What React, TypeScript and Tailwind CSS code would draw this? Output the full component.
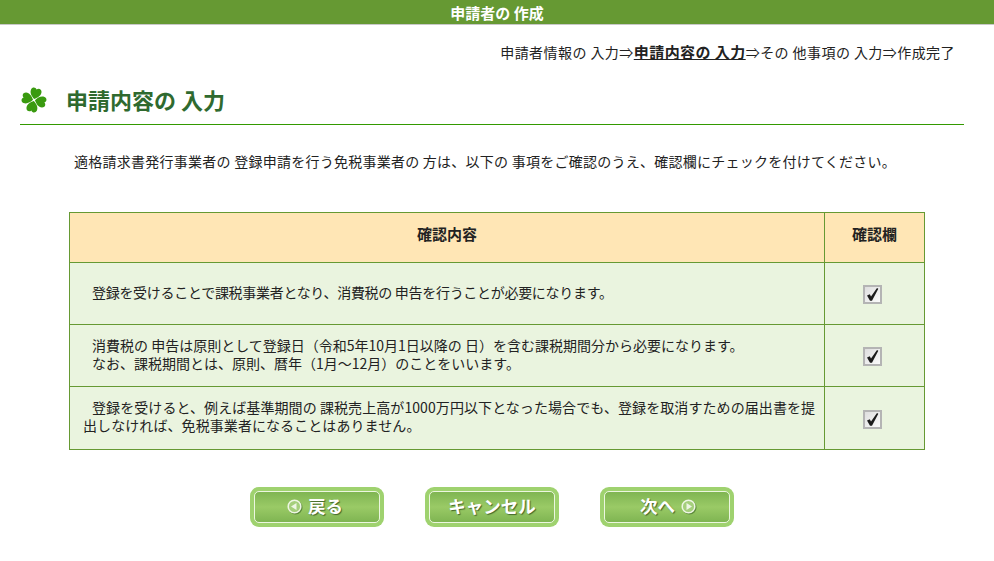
import React from 'react';

const rows = [
  {
    lines: ['登録を受けることで課税事業者となり、消費税の 申告を行うことが必要になります。'],
    h: 'h-[62px]',
    tracking: 'tracking-[-0.3px]',
  },
  {
    lines: [
      '消費税の 申告は原則として登録日（令和5年10月1日以降の 日）を含む課税期間分から必要になります。',
      'なお、課税期間とは、原則、暦年（1月～12月）のことをいいます。',
    ],
    h: 'h-[62px]',
    tracking: 'tracking-normal',
  },
  {
    lines: [
      '登録を受けると、例えば基準期間の 課税売上高が1000万円以下となった場合でも、登録を取消すための届出書を提',
      '出しなければ、免税事業者になることはありません。',
    ],
    h: 'h-[63px]',
    tracking: 'tracking-[0.08px]',
    wrapped: true,
  },
];

function Clover() {
  const leaf = 'M14 13C10.800 11 8 8 8.600 4.500C9.200 1.500 12.600 1 14 3.300C15.400 1 18.800 1.500 19.400 4.500C20 8 17.200 11 14 13Z';
  return (
    <svg width="28" height="28" viewBox="0 0 28 28" className="shrink-0">
      <g fill="#3a9a10">
        <path d={leaf} transform="rotate(14 14 14)" />
        <path d={leaf} transform="rotate(104 14 14)" />
        <path d={leaf} transform="rotate(194 14 14)" />
        <path d={leaf} transform="rotate(284 14 14)" />
      </g>
    </svg>
  );
}

function CheckBox() {
  return (
    <span className="flex h-[19px] w-[19px] items-center justify-center border-2 border-[#b4b4b4] bg-[linear-gradient(135deg,#dedede,#fbfbfb)]">
      <svg width="15" height="15" viewBox="0 0 15 15">
        <path d="M2 8.500L4.800 7.300L6 9.500L12 1L13.300 1.800L7 13.800H5Z" fill="#1c1c1c" />
      </svg>
    </span>
  );
}

function ArrowDisc({ dir }: { dir: 'left' | 'right' }) {
  return (
    <svg width="15" height="15" viewBox="0 0 15 15" className="drop-shadow-[1px_1px_0_#5d8a3c]">
      <circle cx="7.500" cy="7.500" r="6.300" fill="#a5cf7c" stroke="#eef6e4" strokeWidth="1.500" />
      <path d={dir === 'left' ? 'M4 7.500L9.500 4V11Z' : 'M11 7.500L5.500 4V11Z'} fill="#eef6e4" />
    </svg>
  );
}

function NavButton({ children, shift }: { children: React.ReactNode; shift?: string }) {
  return (
    <button className="flex h-[40px] w-[134px] items-center justify-center rounded-[9px] bg-[#9fd26f] p-[4px]">
      <span className={`flex h-full w-full items-center justify-center gap-[6px] rounded-[5px] border border-[#ecf6e0] bg-[linear-gradient(#7fb552,#9aca66_50%,#7fb552)] pb-[2px] text-[17.500px] font-bold text-white [text-shadow:1px_1px_1px_#44682a] ${shift ?? ''}`}>
        {children}
      </span>
    </button>
  );
}

export default function App() {
  return (
    <div className="h-[561px] w-[994px] overflow-hidden bg-white font-['Noto_Sans_CJK_JP','Liberation_Sans',sans-serif] text-[14px] text-[#222]">
      <div className="h-[25px] border-b border-[#c8c8c8] bg-[#669933] text-center text-[15px] leading-[26px] font-bold text-white">
        申請者の 作成
      </div>

      <p className="mt-[16px] pr-[39px] text-right text-[14px] leading-[22px] tracking-[0.44px]">
        申請者情報の 入力⇒<span className="text-[15px] font-bold underline">申請内容の 入力</span>⇒その 他事項の 入力⇒作成完了
      </p>

      <div className="mt-[21px] mr-[30px] ml-[20px] flex h-[41px] items-center gap-[18px] border-b border-[#339900] pb-[8px]">
        <Clover />
        <h1 className="-mt-[1px] text-[22px] font-bold text-[#2f6a2f]">申請内容の 入力</h1>
      </div>

      <p className="mt-[25px] pl-[74px] text-[14px] leading-[22px] tracking-[0.25px]">
        適格請求書発行事業者の 登録申請を行う免税事業者の 方は、以下の 事項をご確認のうえ、確認欄にチェックを付けてください。
      </p>

      <table className="mt-[40px] ml-[69px] w-[856px] table-fixed border-collapse">
        <thead>
          <tr className="h-[50px] bg-[#ffe6b5] text-[15px] font-bold">
            <th className="border border-[#669933] pb-[6px] font-bold">確認内容</th>
            <th className="w-[100px] border border-[#669933] pb-[6px] font-bold">確認欄</th>
          </tr>
        </thead>
        <tbody>
          {rows.map((row) => (
            <tr key={row.lines[0]} className={`${row.h} bg-[#eaf4df]`}>
              <td className={`border border-[#669933] pr-[8px] pb-[4px] pl-[13px] leading-[18px] ${row.tracking}`}>
                {row.lines.map((line, i) => (
                  <div key={line} className={i === 0 || !row.wrapped ? 'pl-[9px] whitespace-nowrap' : 'whitespace-nowrap'}>
                    {line}
                  </div>
                ))}
              </td>
              <td className="border border-[#669933]">
                <div className={row.wrapped ? 'mt-[2px] flex justify-center pr-[4px]' : 'mt-[1px] flex justify-center pr-[4px]'}>
                  <CheckBox />
                </div>
              </td>
            </tr>
          ))}
        </tbody>
      </table>

      <div className="mt-[37px] ml-[250px] flex gap-[41px]">
        <NavButton shift="pr-[4px]">
          <ArrowDisc dir="left" />
          戻る
        </NavButton>
        <NavButton>キャンセル</NavButton>
        <NavButton shift="pl-[2px]">
          次へ
          <ArrowDisc dir="right" />
        </NavButton>
      </div>
    </div>
  );
}
